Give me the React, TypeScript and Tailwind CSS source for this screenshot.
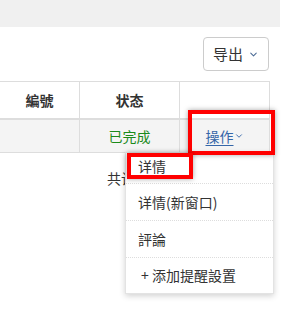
import { ChevronDown } from 'lucide-react';

const font = { fontFamily: '"Noto Sans CJK SC", "Liberation Sans", sans-serif' };

export default function App() {
  const menu = ['详情(新窗口)', '評論'];

  return (
    <div className="relative w-[289px] h-[335px] bg-white overflow-hidden text-[#333]" style={font}>
      <div className="h-[27px] w-[280px] bg-[#f0f0f0]" />

      <div className="flex justify-end pr-[20px] pt-[10px]">
        <button className="w-[66px] h-[34px] border border-[#ccc] rounded-[4px] bg-white flex items-center justify-center gap-[5px] text-[15px] text-[#333]">
          导出 <ChevronDown className="w-[11px] h-[11px] text-[#4a6a94]" strokeWidth={2.2} />
        </button>
      </div>

      <div className="mt-[10px] w-[270px] border-t border-r border-[#ddd]">
        <div className="flex h-[38px] border-b-2 border-[#ddd] text-[14px] font-bold">
          <div className="w-[80px] flex items-center justify-center border-r border-[#ddd]">編號</div>
          <div className="w-[100px] flex items-center justify-center border-r border-[#ddd]">状态</div>
          <div className="flex-1" />
        </div>
        <div className="flex h-[33px] border-b border-[#ddd] bg-[#f4f4f4] text-[14px]">
          <div className="w-[80px] border-r border-[#ddd]" />
          <div className="w-[100px] flex items-center justify-center border-r border-[#ddd] text-[#1a8a1a]">已完成</div>
          <div className="flex-1 flex items-center justify-center">
            <span className="flex items-center text-[#3566a8] underline underline-offset-[3px]">
              操作<ChevronDown className="w-[10px] h-[10px]" strokeWidth={2.2} />
            </span>
          </div>
        </div>
      </div>

      <div className="pl-[107px] pt-[15px] text-[14px]">共计</div>

      <div className="absolute left-[125px] top-[152px] w-[149px] bg-white border border-[#e3e3e3] shadow-[0_2px_6px_rgba(0,0,0,0.18)] text-[14px] text-[#333]">
        <div className="h-[31px] pl-[12px] pb-[4px] flex items-center border-b border-dotted border-[#ddd]">详情</div>
        {menu.map((m) => (
          <div key={m} className="h-[37px] pl-[12px] flex items-center border-b border-dotted border-[#ddd]">
            {m}
          </div>
        ))}
        <div className="h-[35px] pl-[15px] flex items-center">+ 添加提醒設置</div>
      </div>

      <div className="absolute left-[188px] top-[110px] w-[87px] h-[45px] border-4 border-[#ff0000] shadow-[0_0_5px_rgba(0,0,0,0.35)]" />
      <div className="absolute left-[127px] top-[153px] w-[66px] h-[26px] border-4 border-[#ff0000] shadow-[0_0_5px_rgba(0,0,0,0.35)]" />
    </div>
  );
}
